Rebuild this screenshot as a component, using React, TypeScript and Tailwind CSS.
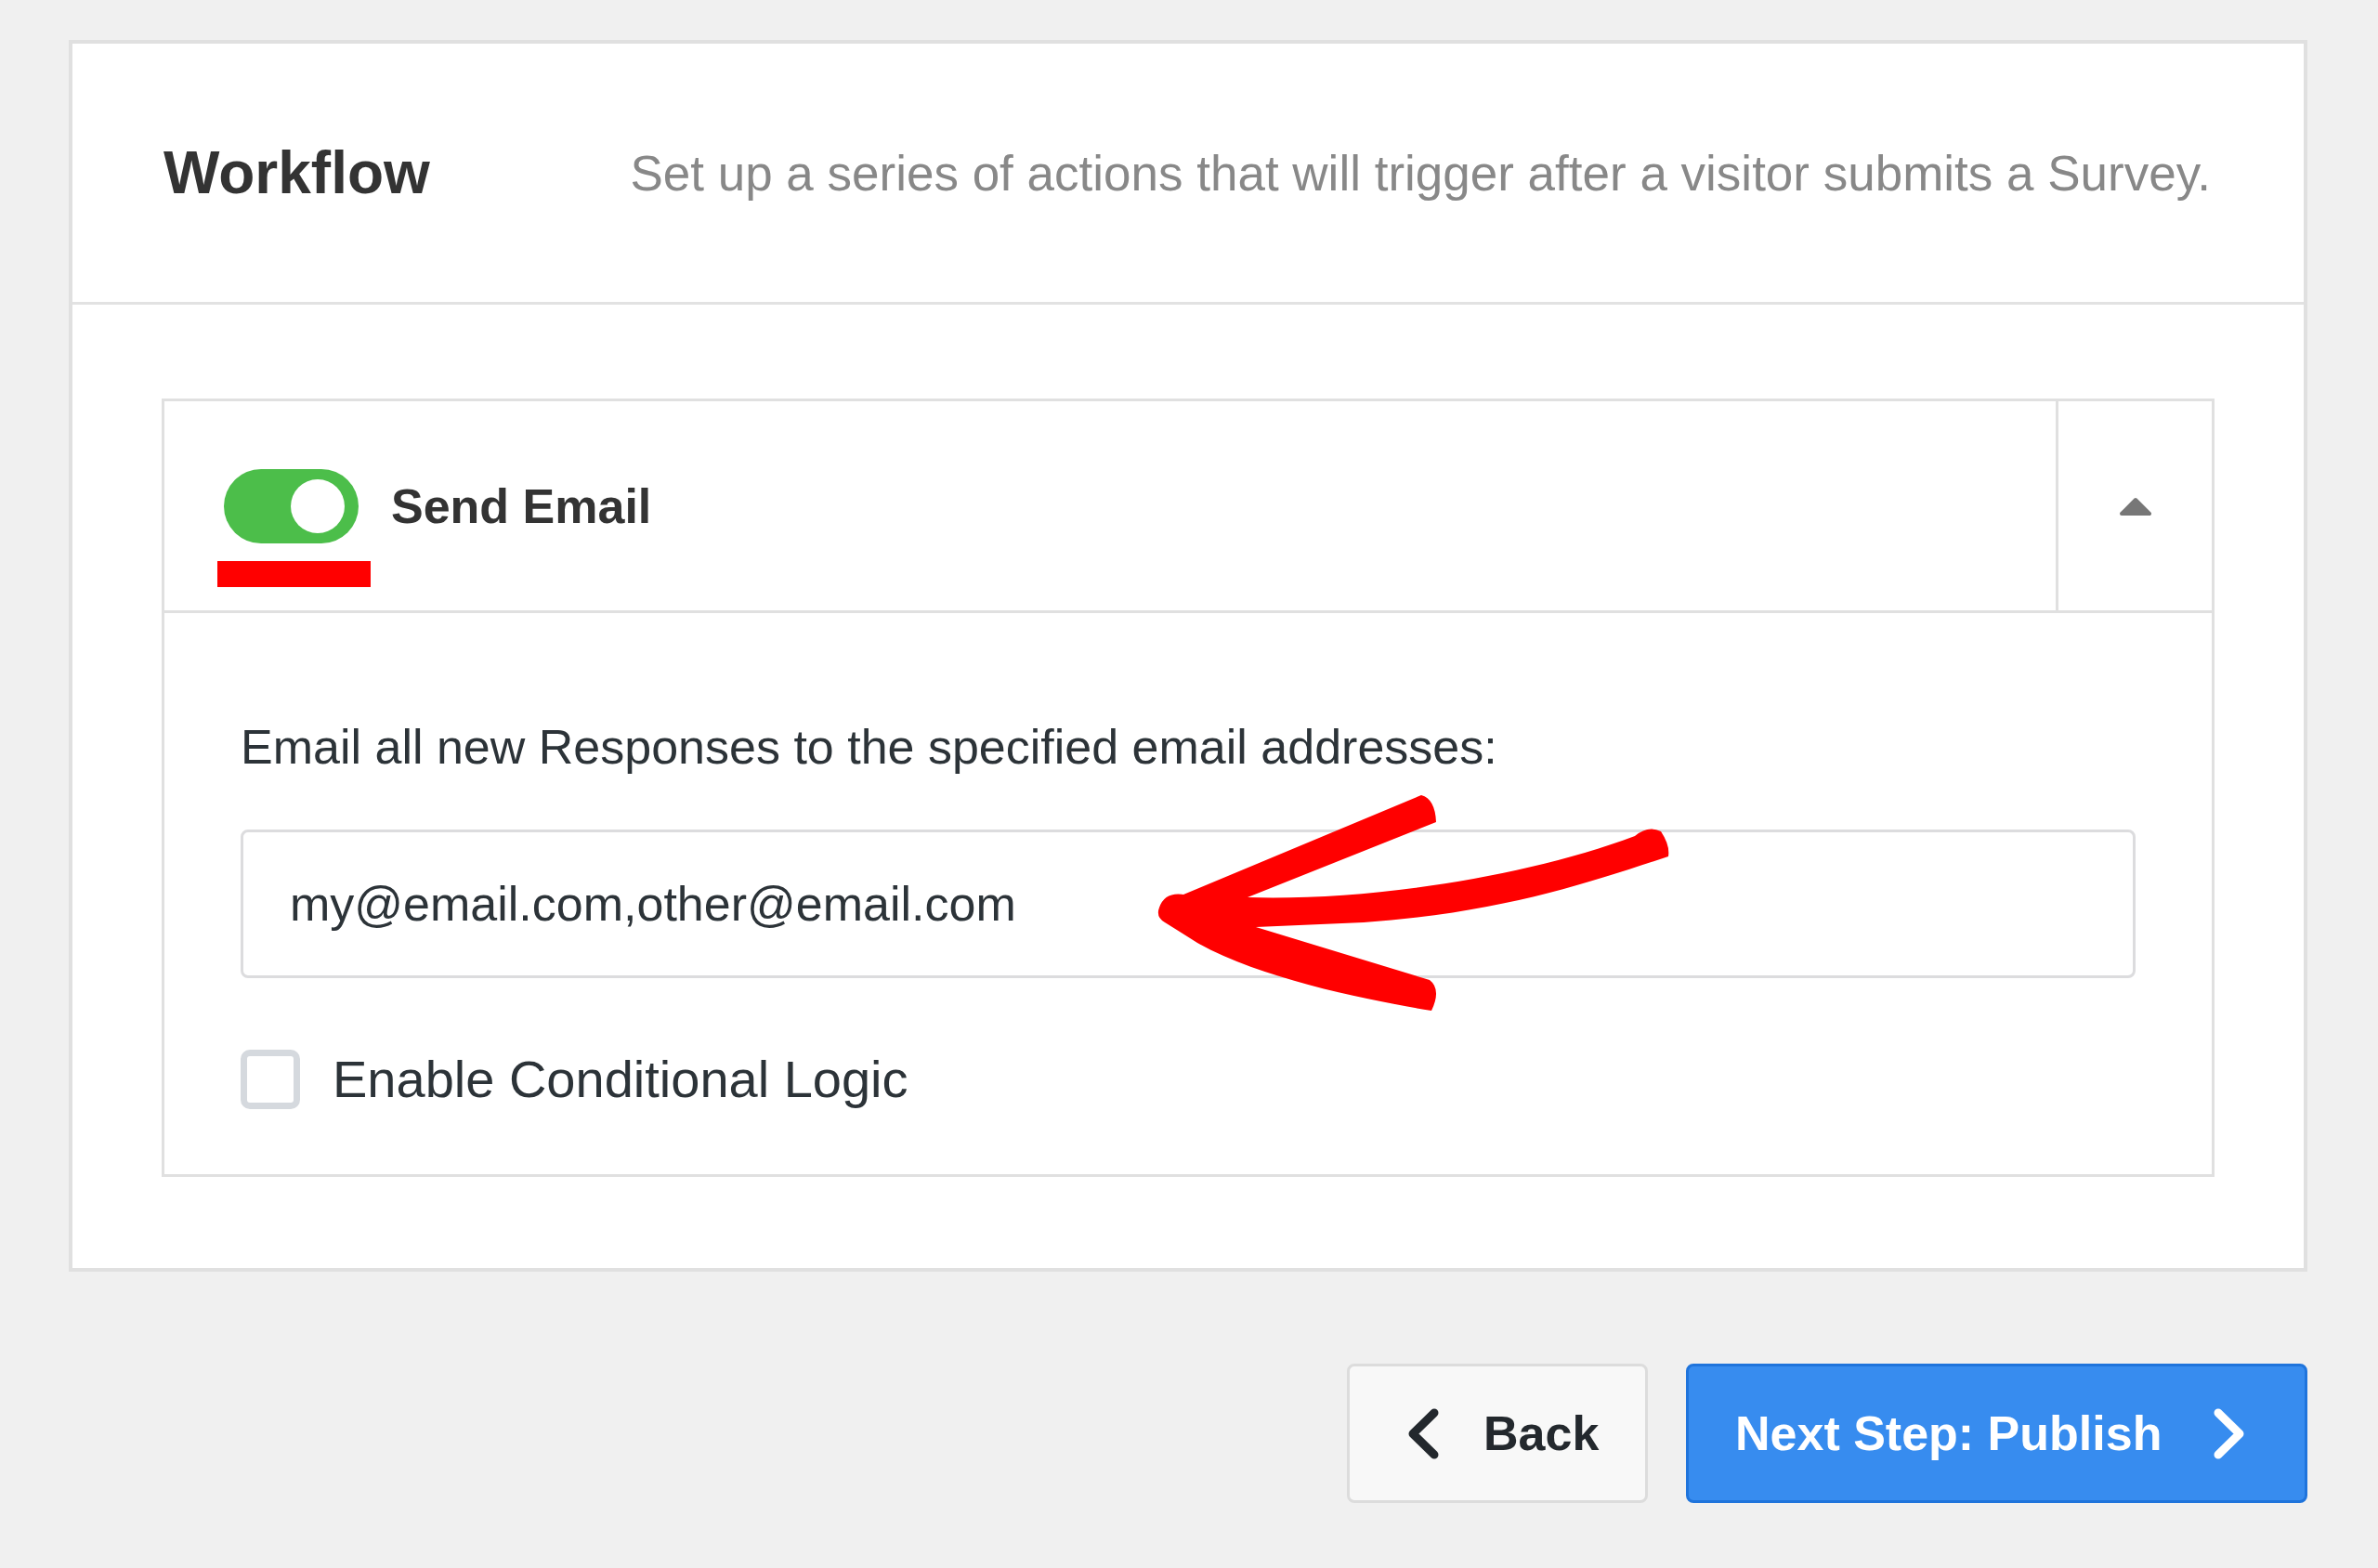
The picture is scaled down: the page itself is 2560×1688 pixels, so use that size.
import React from 'react';

const ChevronLeft: React.FC<{ className?: string }> = ({ className }) => (
  <svg width="34" height="55" viewBox="0 0 34 55" className={className} fill="none">
    <path d="M29 5 L6 27.5 L29 50" stroke="currentColor" strokeWidth="9" strokeLinecap="round" strokeLinejoin="round" />
  </svg>
);

const ChevronRight: React.FC<{ className?: string }> = ({ className }) => (
  <svg width="34" height="55" viewBox="0 0 34 55" className={className} fill="none">
    <path d="M5 5 L28 27.5 L5 50" stroke="currentColor" strokeWidth="9" strokeLinecap="round" strokeLinejoin="round" />
  </svg>
);

// hand drawn annotation arrow
const RedArrow: React.FC = () => (
  <svg
    width="570"
    height="250"
    viewBox="0 0 570 250"
    className="absolute left-[981px] top-[-43px] pointer-events-none"
  >
    <path
      d="M8 127 Q14 110 34 113 L290 6 Q305 10 306 35 L103 116 C230 120 400 95 520 50 Q534 38 548 45 Q558 60 556 72 C470 100 380 132 228 143 L112 148 L299 205 Q312 215 301 238 C240 228 120 205 49 165 L14 143 Q4 137 8 127 Z"
      fill="#ff0000"
    />
  </svg>
);

const App: React.FC = () => {
  const [enabled, setEnabled] = React.useState(true);
  const [emails, setEmails] = React.useState('my@email.com,other@email.com');
  const [conditional, setConditional] = React.useState(false);

  return (
    <div className="min-h-[1688px] w-[2560px] bg-[#f0f0f0] pl-[74px] pt-[43px] font-['Liberation_Sans',Arial,sans-serif]">
      {/* Main card */}
      <div className="w-[2410px] bg-white border-[4px] border-[#e0e0e0]">
        {/* Header */}
        <div className="flex h-[281px] items-center justify-between border-b-[3px] border-[#e2e2e2] pl-[98px] pr-[100px]">
          <h2 className="text-[64px] font-bold leading-none text-[#333333]">Workflow</h2>
          <p className="text-[53px] leading-none text-[#888888]">
            Set up a series of actions that will trigger after a visitor submits a Survey.
          </p>
        </div>

        {/* Body */}
        <div className="px-[96px] pt-[101px] pb-[98px]">
          <div className="border-[3px] border-[#e0e0e0]">
            {/* Action header */}
            <div className="flex h-[228px] border-b-[3px] border-[#e0e0e0]">
              <div className="flex flex-1 items-center gap-[35px] pl-[64px]">
                <div className="relative">
                  <button
                    onClick={() => setEnabled(!enabled)}
                    className={`flex h-[80px] w-[145px] items-center rounded-full pr-[15px] pl-[11px] ${
                      enabled ? 'justify-end bg-[#4cbe4a]' : 'justify-start bg-[#cccccc]'
                    }`}
                  >
                    <span className="block h-[58px] w-[58px] rounded-full bg-white" />
                  </button>
                  <div className="absolute left-[-7px] top-[99px] h-[28px] w-[165px] bg-[#ff0000]" />
                </div>
                <span className="text-[52px] font-bold leading-none text-[#333333]">Send Email</span>
              </div>
              <div className="flex w-[168px] items-center justify-center border-l-[3px] border-[#e0e0e0]">
                <svg width="38" height="22" viewBox="0 0 38 22">
                  <path d="M4 19 L19 4 L34 19 Z" fill="#777777" stroke="#777777" strokeWidth="4" strokeLinejoin="round" />
                </svg>
              </div>
            </div>

            {/* Action body */}
            <div className="px-[82px] pt-[113px] pb-[69px]">
              <label className="block text-[52px] leading-[62px] text-[#2c3338]">
                Email all new Responses to the specified email addresses:
              </label>
              <div className="relative mt-[58px]">
                <input
                  type="text"
                  value={emails}
                  onChange={(e) => setEmails(e.target.value)}
                  className="block h-[160px] w-full rounded-[8px] border-[3px] border-[#dcdcde] bg-white pl-[50px] text-[52px] text-[#2c3338] outline-none"
                />
                <RedArrow />
              </div>
              <label className="mt-[75px] flex h-[67px] cursor-pointer items-center gap-[35px]">
                <span
                  onClick={() => setConditional(!conditional)}
                  className={`block h-[64px] w-[64px] rounded-[10px] border-[7px] border-[#d5d9de] ${
                    conditional ? 'bg-[#378cef]' : 'bg-white'
                  }`}
                />
                <span className="text-[56px] leading-[67px] text-[#2c3338]">Enable Conditional Logic</span>
              </label>
            </div>
          </div>
        </div>
      </div>

      {/* Footer buttons */}
      <div className="mt-[99px] flex w-[2410px] justify-end gap-[41px]">
        <button className="flex h-[150px] w-[324px] items-center gap-[48px] rounded-[8px] border-[3px] border-[#dcdcdc] bg-[#f8f8f8] pl-[62px] text-[#23282d]">
          <ChevronLeft />
          <span className="text-[52px] font-bold leading-none">Back</span>
        </button>
        <button className="flex h-[150px] w-[669px] items-center gap-[56px] rounded-[8px] border-[3px] border-[#1f74dc] bg-[#378cef] pl-[50px] text-white">
          <span className="text-[52px] font-bold leading-none">Next Step: Publish</span>
          <ChevronRight />
        </button>
      </div>
    </div>
  );
};

export default App;
